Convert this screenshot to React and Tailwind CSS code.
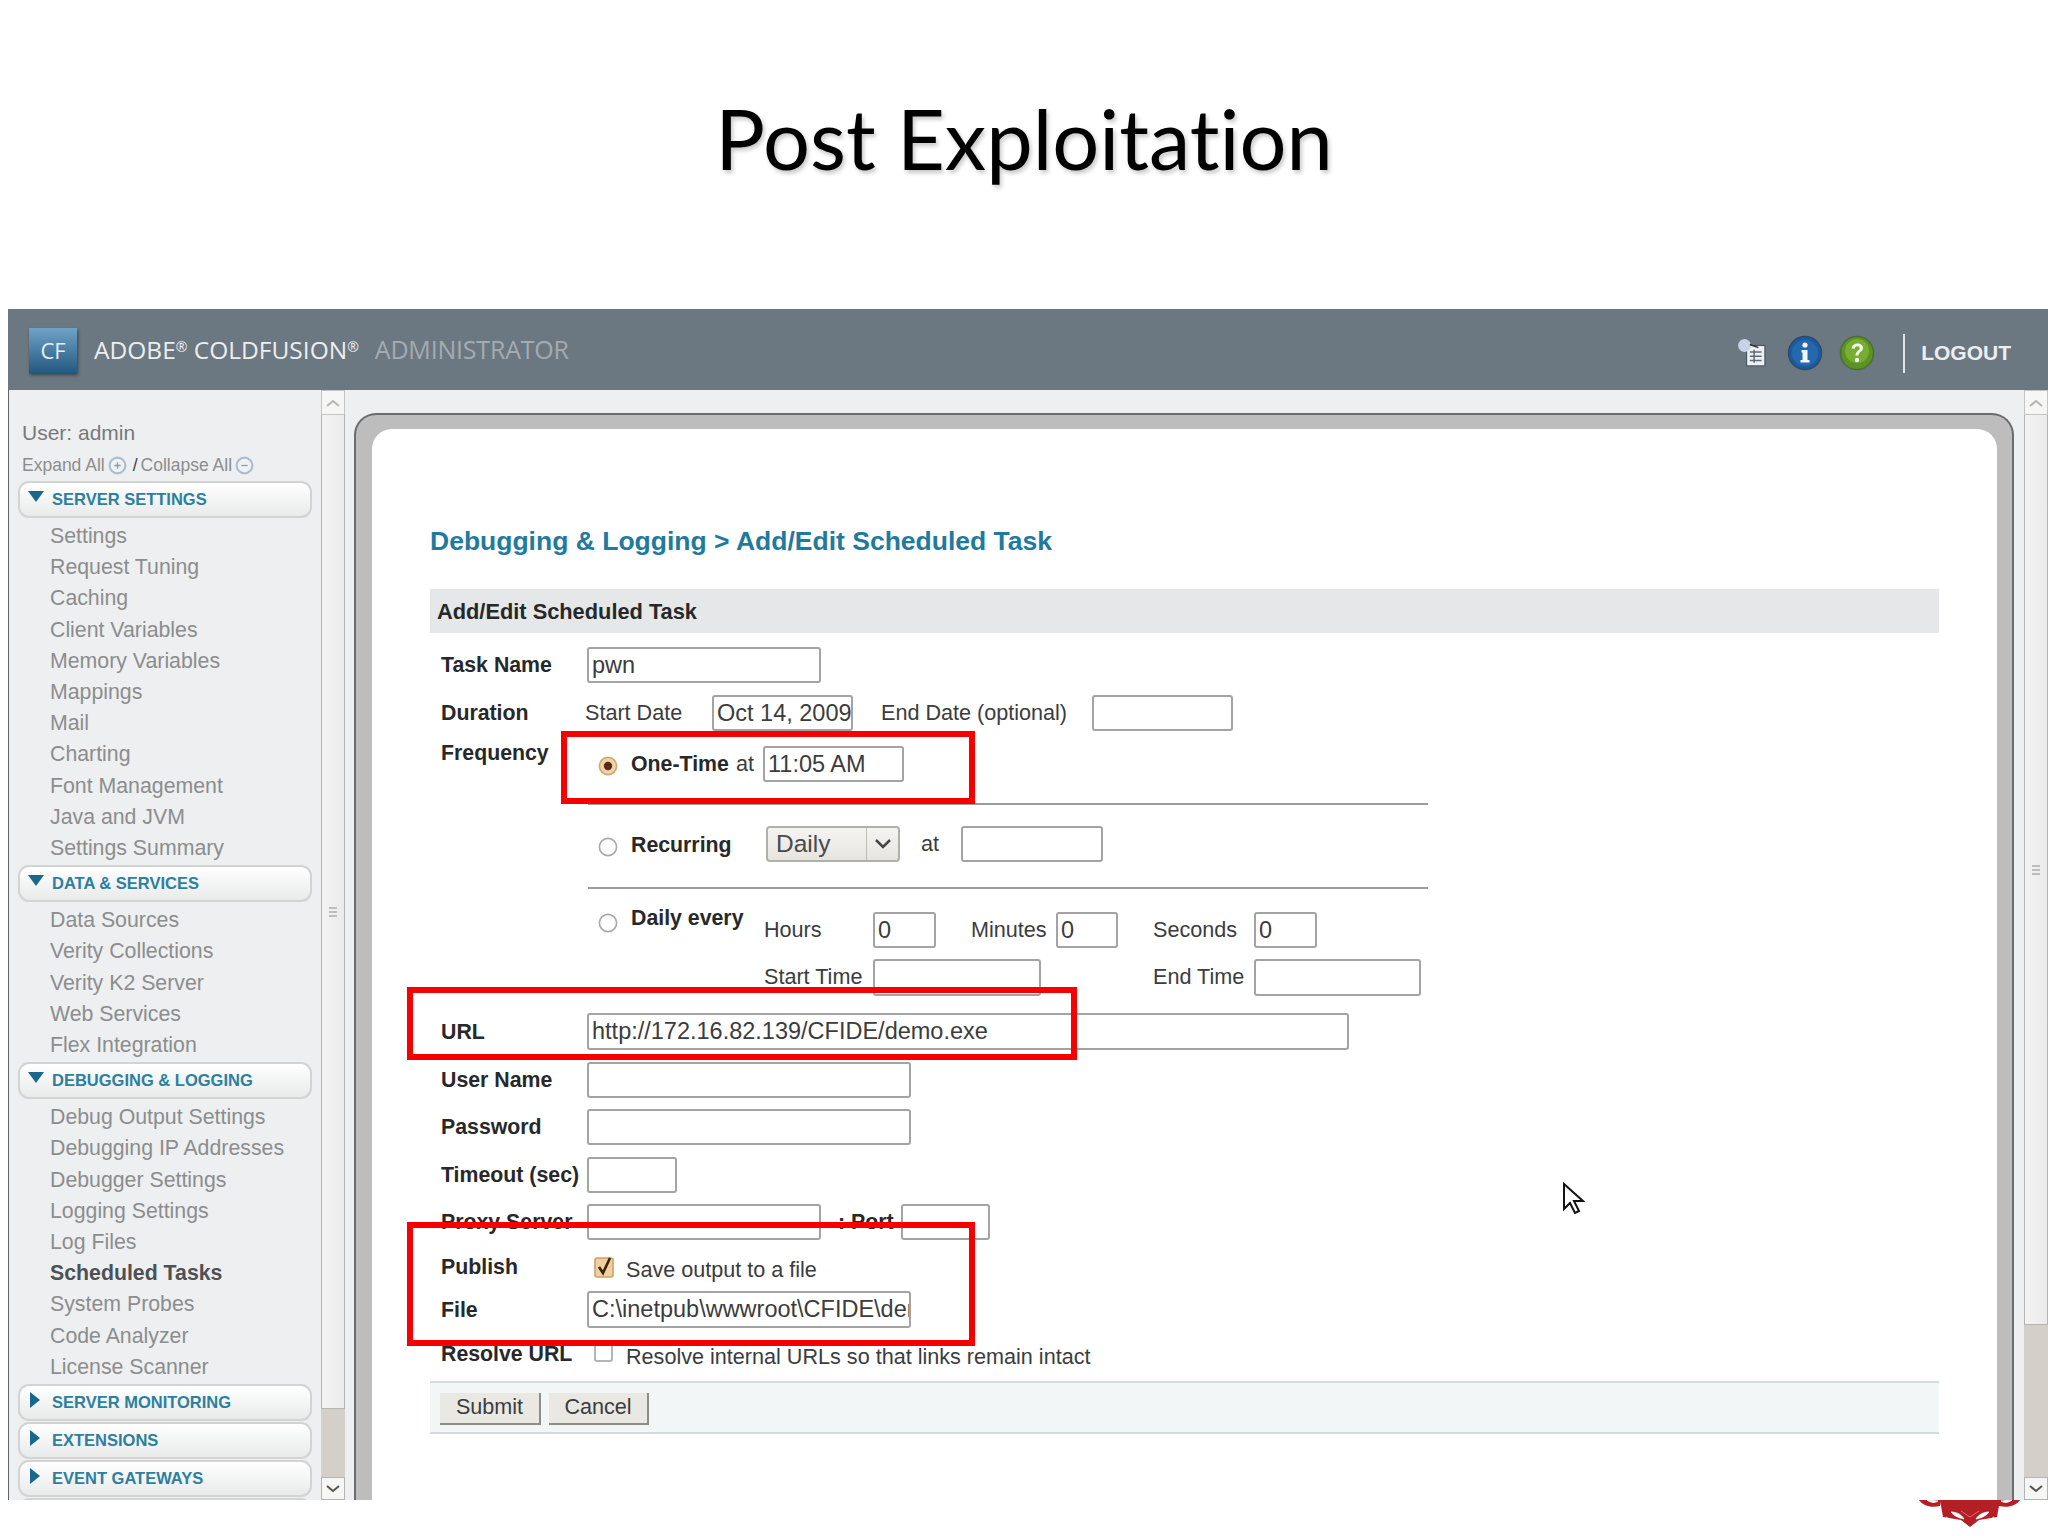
import React from 'react';

const serverItems = ['Settings', 'Request Tuning', 'Caching', 'Client Variables', 'Memory Variables', 'Mappings', 'Mail', 'Charting', 'Font Management', 'Java and JVM', 'Settings Summary'];
const dataItems = ['Data Sources', 'Verity Collections', 'Verity K2 Server', 'Web Services', 'Flex Integration'];
const debugItems = ['Debug Output Settings', 'Debugging IP Addresses', 'Debugger Settings', 'Logging Settings', 'Log Files', 'Scheduled Tasks', 'System Probes', 'Code Analyzer', 'License Scanner'];

const Pill = ({ label, open }) => (
  <div className={`ml-[9px] w-[294px] h-[37px] flex items-center border-2 border-[#d2d3d3] rounded-[11px] bg-gradient-to-b from-white to-[#e9eaea] ${open ? '' : 'mb-[1px]'}`}>
    {open ? (
      <svg className="ml-[8px] mb-[6px] shrink-0" width="16" height="11" viewBox="0 0 16 11"><path d="M0 0h16L8 11z" fill="#17688c" /></svg>
    ) : (
      <svg className="ml-[10px] mb-[6px] mr-[4px] shrink-0" width="10" height="16" viewBox="0 0 10 16"><path d="M0 0l10 8-10 8z" fill="#17688c" /></svg>
    )}
    <span className="ml-[8px] text-[16.5px] font-bold text-[#2d7f9f] whitespace-nowrap">{label}</span>
  </div>
);

const NavList = ({ items }) => (
  <div className="pt-[3px] pb-[1px] pl-[41px]">
    {items.map((item) => (
      <div key={item} className={item === 'Scheduled Tasks' ? 'text-[21.3px] leading-[31.2px] font-bold text-[#4d5154]' : 'text-[21.3px] leading-[31.2px] text-[#8b8d8e]'}>
        {item}
      </div>
    ))}
  </div>
);

const Chevron = ({ up }) => (
  <svg width="14" height="8" viewBox="0 0 14 8">
    <path d={up ? 'M1 7l6-5 6 5' : 'M1 1l6 5 6-5'} fill="none" stroke={up ? '#b5b5b5' : '#555'} strokeWidth="2" />
  </svg>
);

const Scrollbar = ({ thumb }) => (
  <div className="w-[24px] h-full flex flex-col shrink-0 bg-[#eeeff0]">
    <div className="h-[25px] shrink-0 flex items-center justify-center border border-[#c4c4c4] bg-[#f6f6f5]"><Chevron up /></div>
    <div className={`${thumb} shrink-0 flex items-center justify-center border-x border-b border-[#b4b4b4] bg-gradient-to-r from-[#f3f3f3] to-[#ebebeb]`}>
      <div className="w-[8px] h-[10px] border-y-2 border-[#bdbdbd] flex items-center"><div className="w-full h-[2px] bg-[#bdbdbd]" /></div>
    </div>
    <div className="flex-1 bg-[#d5cfc9]" />
    <div className="h-[23px] shrink-0 flex items-center justify-center border border-[#b4b4b4] bg-[#f6f6f5]"><Chevron /></div>
  </div>
);

const Field = ({ w, h = 'h-[36px]', value = '' }) => (
  <input
    readOnly
    value={value}
    className={`${w} ${h} shrink-0 bg-white border-2 border-[#a3a3a3] rounded-[3px] pl-[3px] pr-0 text-[23.5px] text-[#3c3c3c] outline-none`}
  />
);

const Label = ({ children, w = 'w-[146px]' }) => (
  <div className={`${w} shrink-0 pt-[2px] text-[21.3px] font-bold text-[#26282a] whitespace-nowrap`}>{children}</div>
);

const Text = ({ children, w }) => (
  <div className={`${w} shrink-0 text-[21.6px] text-[#3a3c3e] whitespace-nowrap`}>{children}</div>
);

const Radio = ({ checked, extra = '' }) => (
  <svg className={`shrink-0 ${extra}`} width="20" height="20" viewBox="0 0 20 20">
    <circle cx="10" cy="10" r="8.6" fill={checked ? '#ecd3ad' : '#fff'} stroke={checked ? '#d9a667' : '#a8a8a8'} strokeWidth="1.6" />
    {checked && <circle cx="10" cy="10" r="4.2" fill="#5c2a10" />}
  </svg>
);

const Bold = ({ children }) => <span className="text-[21.3px] font-bold text-[#26282a] whitespace-nowrap">{children}</span>;

const Divider = () => <div className="ml-[1px] w-[840px] h-[2px] bg-[#9c9c9c]" />;

const App = () => (
  <div className="relative w-[2048px] h-[1536px] bg-white overflow-hidden font-['Liberation_Sans',Arial,sans-serif]">
    <div className="h-[309px] flex justify-center pt-[82px]">
      <h1 className="font-['Lato',sans-serif] text-[83px] leading-[112px] text-black [font-variant-ligatures:none] [text-shadow:2px_3px_4px_rgba(0,0,0,0.22)]">Post Exploitation</h1>
    </div>

    <div className="ml-[8px] w-[2040px] h-[1191px] flex flex-col overflow-hidden">
      <div className="h-[81px] shrink-0 bg-[#6b7781] flex items-center">
        <div className="ml-[21px] mt-[2px] w-[48px] h-[45px] flex items-center justify-center bg-gradient-to-b from-[#6fa3c8] to-[#24597f] shadow-[1px_2px_3px_rgba(0,0,0,0.45)] font-['Open_Sans',sans-serif] text-[22px] text-[#e6eef4]">CF</div>
        <div className="ml-[17px] mt-[1px] font-['Open_Sans',sans-serif] text-[24.5px] text-[#eceeef] whitespace-nowrap">
          ADOBE<sup className="text-[14px]">®</sup> COLDFUSION<sup className="text-[14px]">®</sup>
        </div>
        <div className="ml-[16px] mt-[1px] font-['Open_Sans',sans-serif] text-[25px] tracking-[-0.2px] text-[#a4abb1] whitespace-nowrap">ADMINISTRATOR</div>
        <div className="ml-auto mt-[7px] flex items-center">
          <svg width="30" height="30" viewBox="0 0 28 28">
            <rect x="9" y="7" width="17" height="19" fill="#eef1f3" stroke="#46525c" strokeWidth="1" />
            <path d="M12 13h11M12 17h11M12 21h11M16 11v12" stroke="#5b6b78" strokeWidth="1.4" />
            <circle cx="7" cy="7" r="6" fill="#c6d4e6" />
            <path d="M12 6l8 3" stroke="#333" strokeWidth="1.4" />
          </svg>
          <svg className="ml-[20px]" width="36" height="36" viewBox="0 0 36 36">
            <circle cx="18" cy="18" r="16.5" fill="#1c5a9e" stroke="#2e4a6e" strokeWidth="1.5" />
            <circle cx="18" cy="18" r="13" fill="#2468b0" />
            <circle cx="18" cy="10" r="2.6" fill="#f3f6fa" />
            <path d="M14.5 15h6v10h2v2.4h-9V25h2v-7.6h-1z" fill="#f3f6fa" />
          </svg>
          <svg className="ml-[16px]" width="36" height="36" viewBox="0 0 36 36">
            <circle cx="18" cy="18" r="16.5" fill="#5c9424" stroke="#4d6e32" strokeWidth="1.5" />
            <circle cx="18" cy="16" r="12" fill="#78ad34" />
            <path d="M12.5 13.5c.5-3.5 3-5 6-5s5.500 1.800 5.500 4.500c0 3.800-4.500 4-4.500 7.500h-3c0-4.800 4.300-5 4.300-7.300 0-1.200-1-2-2.400-2s-2.500 1-2.700 2.600z" fill="#f1f5e6" />
            <circle cx="18" cy="25" r="2.200" fill="#f1f5e6" />
          </svg>
          <div className="ml-[28px] w-[2px] h-[39px] bg-[#dfe3e6]" />
          <div className="ml-[16px] mr-[37px] text-[21px] font-bold text-[#eceef0]">LOGOUT</div>
        </div>
      </div>

      <div className="flex flex-1 min-h-0">
        <div className="w-[313px] shrink-0 bg-[#eeeff0] border-l border-[#5f6468] overflow-hidden">
          <div className="pl-[13px] pt-[31px] text-[21px] leading-[24px] text-[#77797b]">User: admin</div>
          <div className="pl-[13px] mt-[10px] h-[20px] flex items-center text-[17.5px] text-[#8b8d8e] whitespace-nowrap">
            Expand All
            <svg className="mx-[3px]" width="19" height="19" viewBox="0 0 18 18"><circle cx="9" cy="9" r="7.500" fill="#eef2f5" stroke="#a9bfd0" strokeWidth="2" /><path d="M6 9h6M9 6v6" stroke="#8a9aa6" strokeWidth="1.200" /></svg>
            <span className="text-[#3f4245] mx-[3px]">/</span> Collapse All
            <svg className="ml-[3px]" width="19" height="19" viewBox="0 0 18 18"><circle cx="9" cy="9" r="7.500" fill="#eef2f5" stroke="#a9bfd0" strokeWidth="2" /><path d="M6 9h6" stroke="#8a9aa6" strokeWidth="1.200" /></svg>
          </div>
          <div className="h-[6px]" />
          <Pill label="SERVER SETTINGS" open />
          <NavList items={serverItems} />
          <Pill label="DATA & SERVICES" open />
          <NavList items={dataItems} />
          <Pill label="DEBUGGING & LOGGING" open />
          <NavList items={debugItems} />
          <Pill label="SERVER MONITORING" />
          <Pill label="EXTENSIONS" />
          <Pill label="EVENT GATEWAYS" />
          <div className="ml-[9px] w-[294px] h-[37px] border-2 border-[#d2d3d3] rounded-[11px]" />
        </div>

        <Scrollbar thumb="h-[994px]" />

        <div className="w-[1679px] shrink-0 h-full bg-[#eeeff0] pt-[23px] pl-[9px] pr-[10px]">
          <div className="h-full bg-[#bdbdbe] border-t-2 border-l-2 border-r-2 border-[#6a6c6e] rounded-t-[22px] pt-[14px] pl-[16px] pr-[15px]">
            <div className="h-full bg-white rounded-t-[20px] pl-[58px] pt-[95px]">
              <h2 className="h-[34px] text-[26.5px] leading-[34px] font-bold text-[#1f7a9e] whitespace-nowrap">Debugging &amp; Logging &gt; Add/Edit Scheduled Task</h2>
              <div className="mt-[31px] w-[1509px] h-[44px] bg-[#e5e7e8] flex items-center pl-[7px] pt-[2px] text-[21.8px] font-bold text-[#26282a]">Add/Edit Scheduled Task</div>

              <div className="w-[1509px] pl-[11px]">
                <div className="mt-[14px] flex items-center">
                  <Label>Task Name</Label>
                  <Field w="w-[234px]" value="pwn" />
                </div>
                <div className="mt-[12px] flex items-center">
                  <Label>Duration</Label>
                  <div className="-ml-[2px]"><Text w="w-[127px]">Start Date</Text></div>
                  <Field w="w-[141px]" value="Oct 14, 2009" />
                  <div className="ml-[28px]"><Text w="w-[211px]">End Date (optional)</Text></div>
                  <Field w="w-[141px]" />
                </div>

                <div className="flex items-start">
                  <div className="mt-[5px]"><Label>Frequency</Label></div>
                  <div>
                    <div className="mt-[15px] flex items-center">
                      <Radio checked extra="ml-[11px] mt-[4px]" />
                      <div className="ml-[13px] w-[105px] pt-[2px] flex items-center"><Bold>One-Time</Bold></div>
                      <Text w="w-[27px]">at</Text>
                      <Field w="w-[141px]" value="11:05 AM" />
                    </div>
                    <div className="mt-[21px]"><Divider /></div>
                    <div className="mt-[21px] flex items-center">
                      <Radio extra="ml-[11px] mt-[6px]" />
                      <div className="ml-[13px] w-[135px] pt-[4px]"><Bold>Recurring</Bold></div>
                      <div className="w-[134px] h-[36px] flex items-center border-2 border-[#b1b1ab] rounded-[4px] bg-gradient-to-b from-[#f5f4f1] to-[#e6e5e0] text-[24.5px] text-[#4a4a4a]">
                        <span className="pl-[8px] flex-1">Daily</span>
                        <div className="w-[32px] h-full flex items-center justify-center border-l border-[#bdbdb8]">
                          <svg width="16" height="10" viewBox="0 0 16 10"><path d="M1 1l7 7 7-7" fill="none" stroke="#444" strokeWidth="2.500" /></svg>
                        </div>
                      </div>
                      <div className="ml-[21px]"><Text w="w-[40px]">at</Text></div>
                      <Field w="w-[142px]" />
                    </div>
                    <div className="mt-[25px]"><Divider /></div>
                    <div className="mt-[23px] flex items-start">
                      <Radio extra="ml-[11px] mt-[1px]" />
                      <div className="ml-[13px] w-[133px] -mt-[9px]"><Bold>Daily every</Bold></div>
                      <div className="flex items-center">
                        <Text w="w-[109px]">Hours</Text>
                        <Field w="w-[63px]" value="0" />
                        <div className="ml-[35px]"><Text w="w-[85px]">Minutes</Text></div>
                        <Field w="w-[62px]" value="0" />
                        <div className="ml-[35px]"><Text w="w-[101px]">Seconds</Text></div>
                        <Field w="w-[63px]" value="0" />
                      </div>
                    </div>
                    <div className="mt-[11px] ml-[177px] flex items-center">
                      <Text w="w-[109px]">Start Time</Text>
                      <Field w="w-[168px]" h="h-[37px]" />
                      <div className="ml-[112px]"><Text w="w-[101px]">End Time</Text></div>
                      <Field w="w-[167px]" h="h-[37px]" />
                    </div>
                  </div>
                </div>

                <div className="mt-[17px] flex items-center">
                  <Label>URL</Label>
                  <Field w="w-[762px]" h="h-[37px]" value="http://172.16.82.139/CFIDE/demo.exe" />
                </div>
                <div className="mt-[12px] flex items-center">
                  <Label>User Name</Label>
                  <Field w="w-[324px]" />
                </div>
                <div className="mt-[11px] flex items-center">
                  <Label>Password</Label>
                  <Field w="w-[324px]" />
                </div>
                <div className="mt-[12px] flex items-center">
                  <Label>Timeout (sec)</Label>
                  <Field w="w-[90px]" />
                </div>
                <div className="mt-[11px] flex items-center">
                  <Label>Proxy Server</Label>
                  <Field w="w-[234px]" />
                  <div className="ml-[17px]"><Label w="w-[63px]">: Port</Label></div>
                  <Field w="w-[89px]" />
                </div>
                <div className="mt-[15px] h-[24px] flex items-center">
                  <Label>Publish</Label>
                  <svg className="ml-[7px] shrink-0" width="22" height="24" viewBox="0 0 22 24">
                    <rect x="1" y="3" width="18" height="19" rx="2" fill="#f0cfa0" stroke="#cfa066" strokeWidth="1.600" />
                    <path d="M5 12l4 6 7-15" fill="none" stroke="#3c2208" strokeWidth="2.600" />
                  </svg>
                  <div className="ml-[10px] mt-[6px]"><Text>Save output to a file</Text></div>
                </div>
                <div className="mt-[12px] flex items-center">
                  <Label>File</Label>
                  <Field w="w-[324px]" h="h-[37px]" value="C:\inetpub\wwwroot\CFIDE\demo.exe" />
                </div>
                <div className="mt-[14px] h-[24px] flex items-center">
                  <Label>Resolve URL</Label>
                  <div className="ml-[7px] mb-[3px] w-[19px] h-[19px] shrink-0 bg-white border-2 border-[#b5b5b5] rounded-[3px]" />
                  <div className="ml-[13px] mt-[6px]"><Text>Resolve internal URLs so that links remain intact</Text></div>
                </div>
              </div>

              <div className="mt-[15px] w-[1509px] h-[53px] bg-[#f3f6f7] border-y-2 border-[#d5dadb] flex items-center pl-[10px]">
                <div className="mt-[2px] w-[101px] h-[32px] flex items-center justify-center bg-[#e9e8e2] border-r-2 border-b-2 border-[#8d8d87] text-[21.6px] text-[#3a3c3e]">Submit</div>
                <div className="mt-[2px] ml-[8px] w-[100px] h-[32px] flex items-center justify-center bg-[#e9e8e2] border-r-2 border-b-2 border-[#8d8d87] text-[21.6px] text-[#3a3c3e]">Cancel</div>
              </div>
            </div>
          </div>
        </div>

        <Scrollbar thumb="h-[910px]" />
      </div>
    </div>

    <div className="flex justify-end pr-[28px]">
      <svg width="101" height="28" viewBox="0 0 101 28">
        <path d="M21 0h60l-3 17-18 3-9 7-9-7-18-3z" fill="#b31f24" />
        <path d="M0 0c4 6 12 8 21 6l1-6zM101 0c-4 6-12 8-21 6l-1-6z" fill="#b31f24" />
        <path d="M8 0c4 3 8 3 11 1zM93 0c-4 3-8 3-11 1zM32 12c5 0 10 2 13 7-5-1-10-3-13-7zM70 12c-5 0-10 2-13 7 5-1 10-3 13-7zM27 17l10 6M75 17l-10 6" fill="#fff" stroke="#fff" strokeWidth="0.800" />
        <path d="M42 11l9 6 9-6" fill="none" stroke="#e26a6a" strokeWidth="1" />
      </svg>
    </div>

    <div className="absolute left-[561px] top-[731px] w-[414px] h-[73px] border-[6px] border-[#f60000]" />
    <div className="absolute left-[407px] top-[987px] w-[670px] h-[73px] border-[6px] border-[#f60000]" />
    <div className="absolute left-[407px] top-[1222px] w-[568px] h-[124px] border-[6px] border-[#f60000]" />

    <svg className="absolute left-[1562px] top-[1182px]" width="26" height="34" viewBox="0 0 26 34">
      <path d="M2 2v25l6-6 5 10 4-2-5-10h9z" fill="#fff" stroke="#111" strokeWidth="2" strokeLinejoin="miter" />
    </svg>
  </div>
);

export default App;
